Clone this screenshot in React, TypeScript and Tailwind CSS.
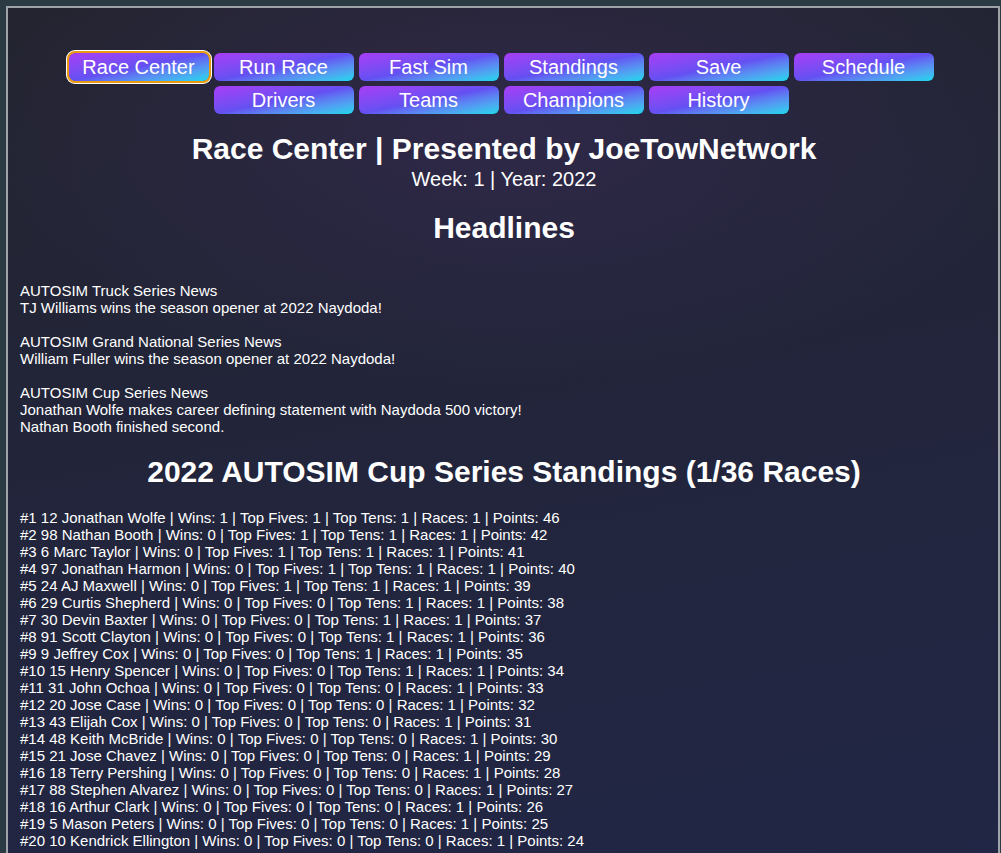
import React from "react";

const navRow1 = ["Race Center", "Run Race", "Fast Sim", "Standings", "Save", "Schedule"];
const navRow2 = ["Drivers", "Teams", "Champions", "History"];

const standings: [string, string, number, number, number, number][] = [
  ["12", "Jonathan Wolfe", 1, 1, 1, 46],
  ["98", "Nathan Booth", 0, 1, 1, 42],
  ["6", "Marc Taylor", 0, 1, 1, 41],
  ["97", "Jonathan Harmon", 0, 1, 1, 40],
  ["24", "AJ Maxwell", 0, 1, 1, 39],
  ["29", "Curtis Shepherd", 0, 0, 1, 38],
  ["30", "Devin Baxter", 0, 0, 1, 37],
  ["91", "Scott Clayton", 0, 0, 1, 36],
  ["9", "Jeffrey Cox", 0, 0, 1, 35],
  ["15", "Henry Spencer", 0, 0, 1, 34],
  ["31", "John Ochoa", 0, 0, 0, 33],
  ["20", "Jose Case", 0, 0, 0, 32],
  ["43", "Elijah Cox", 0, 0, 0, 31],
  ["48", "Keith McBride", 0, 0, 0, 30],
  ["21", "Jose Chavez", 0, 0, 0, 29],
  ["18", "Terry Pershing", 0, 0, 0, 28],
  ["88", "Stephen Alvarez", 0, 0, 0, 27],
  ["16", "Arthur Clark", 0, 0, 0, 26],
  ["5", "Mason Peters", 0, 0, 0, 25],
  ["10", "Kendrick Ellington", 0, 0, 0, 24],
];

function NavButton({ label, active }: { label: string; active?: boolean }) {
  return (
    <button
      className={
        "w-[140px] h-[28px] rounded-[6px] bg-gradient-to-br from-[#a83cf6] via-[#6450f2] to-[#0bd8ec] text-white text-[20px] leading-[28px] text-center " +
        (active ? "outline-2 outline-[#e8990f] ring-[3px] ring-white" : "")
      }
    >
      {label}
    </button>
  );
}

export default function App() {
  return (
    <div className="min-h-screen bg-[#2c3b43] pt-[6px] pl-[6px] pr-[1px] font-['Liberation_Sans',Arial,sans-serif] text-white">
      <div className="border-2 border-b-0 border-[#9ea4a7] min-h-[847px] bg-[radial-gradient(ellipse_55%_30%_at_50%_14%,rgba(70,48,110,0.35),transparent_100%),linear-gradient(170deg,#23242f_0%,#22253a_45%,#212646_100%)] px-[12px] pt-[45px] pb-4">
        <nav className="flex flex-col items-center gap-[5px] pr-[4px]">
          <div className="flex justify-center gap-[5px]">
            {navRow1.map((l, i) => (
              <NavButton key={l} label={l} active={i === 0} />
            ))}
          </div>
          <div className="flex justify-center gap-[5px]">
            {navRow2.map((l) => (
              <NavButton key={l} label={l} />
            ))}
          </div>
        </nav>

        <h1 className="mt-[17px] pl-[2px] text-center text-[30px] leading-[36px] font-bold">
          Race Center | Presented by JoeTowNetwork
        </h1>
        <p className="mt-[1px] pl-[2px] text-center text-[20px] leading-[23px]">Week: 1 | Year: 2022</p>

        <h2 className="mt-[19px] pl-[2px] text-center text-[30px] leading-[36px] font-bold">Headlines</h2>

        <div className="mt-[36px] text-[15px] leading-[17px]">
          <p>AUTOSIM Truck Series News</p>
          <p>TJ Williams wins the season opener at 2022 Naydoda!</p>
          <p className="mt-[17px]">AUTOSIM Grand National Series News</p>
          <p>William Fuller wins the season opener at 2022 Naydoda!</p>
          <p className="mt-[17px]">AUTOSIM Cup Series News</p>
          <p>Jonathan Wolfe makes career defining statement with Naydoda 500 victory!</p>
          <p>Nathan Booth finished second.</p>
        </div>

        <h2 className="mt-[19px] pl-[2px] text-center text-[30px] leading-[36px] font-bold">
          2022 AUTOSIM Cup Series Standings (1/36 Races)
        </h2>

        <ul className="mt-[19px] text-[15px] leading-[17px]">
          {standings.map(([num, name, w, t5, t10, pts], i) => (
            <li key={name}>
              #{i + 1} {num} {name} | Wins: {w} | Top Fives: {t5} | Top Tens: {t10} | Races: 1 | Points: {pts}
            </li>
          ))}
        </ul>
      </div>
    </div>
  );
}
